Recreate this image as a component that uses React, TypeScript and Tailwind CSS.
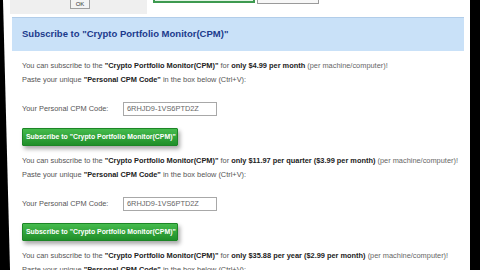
import React from 'react';

interface Plan {
  price: string;
}

const plans: Plan[] = [
  { price: 'only $4.99 per month' },
  { price: 'only $11.97 per quarter ($3.99 per month)' },
  { price: 'only $35.88 per year ($2.99 per month)' },
];

const PlanBlock: React.FC<{ plan: Plan }> = ({ plan }) => (
  <div className="flex flex-col shrink-0">
    <p className="mt-[8px] leading-[14px] whitespace-nowrap text-[#555]">
      You can subscribe to the{' '}
      <b className="text-[#222]">"Crypto Portfolio Monitor(CPM)"</b> for{' '}
      <b className="text-[#222]">{plan.price}</b>{' '}
      <span className="text-[#666]">(per machine/computer)!</span>
    </p>
    <p className="leading-[14px] whitespace-nowrap text-[#555]">
      Paste your unique <b className="text-[#222]">"Personal CPM Code"</b> in the box below (Ctrl+V):
    </p>
    <div className="mt-[15px] flex items-center h-[14px] shrink-0">
      <span className="w-[101px] text-[#555]">Your Personal CPM Code:</span>
      <div className="w-[94px] h-[14px] border border-[#a8a8a8] bg-white px-[3px] flex items-center text-[#666]">
        6RHJD9-1VS6PTD2Z
      </div>
    </div>
    <div className="mt-[12px] w-[156px] h-[18px] shrink-0 flex items-center pl-[3px] rounded-[1px] border border-[#1d8526] bg-gradient-to-b from-[#45bb4d] to-[#1f8f29] shadow-[2px_3px_4px_rgba(0,0,0,0.35)] text-white font-bold text-[6.9px] whitespace-nowrap">
      Subscribe to "Crypto Portfolio Monitor(CPM)"
    </div>
  </div>
);

export default function App() {
  return (
    <div className="w-[480px] h-[270px] overflow-hidden bg-white flex font-['Liberation_Sans',Arial,sans-serif]">
      <div className="w-[10px] h-full shrink-0 bg-black [clip-path:polygon(0_0,3px_0,10px_100%,0_100%)]" />
      <div className="w-[460px] shrink-0 flex flex-col">
        <div className="h-[15px] shrink-0 flex">
          <div className="w-[137px] h-[14px] bg-[#efefef] pl-[60px]">
            <div className="w-[20px] h-[9px] border border-t-0 border-[#a0a0a0] bg-[#f4f4f4] flex items-center justify-center text-[6px] text-[#333]">
              OK
            </div>
          </div>
          <div className="ml-[6px] w-[102px] h-[3px] border-2 border-t-0 border-[#3e9a50] bg-[#e4f4e6]" />
          <div className="ml-[2px] w-[62px] h-[4px] border border-t-0 border-[#9a9a9a] bg-[#f7f7f7]" />
        </div>
        <div className="mt-[2px] ml-[2px] mr-[6px] h-[34px] shrink-0 bg-[#c9e1f8] border-t border-[#b2cde9] flex items-center pl-[10px]">
          <h1 className="text-[9.5px] font-bold text-[#1b3a8c] whitespace-nowrap">
            Subscribe to "Crypto Portfolio Monitor(CPM)"
          </h1>
        </div>
        <div className="pl-[12px] text-[7.4px] flex flex-col shrink-0">
          {plans.map((p) => (
            <PlanBlock key={p.price} plan={p} />
          ))}
        </div>
      </div>
      <div className="w-[10px] h-full shrink-0 bg-black" />
    </div>
  );
}
